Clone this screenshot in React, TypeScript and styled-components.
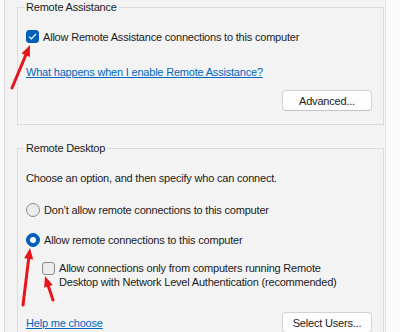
import React from "react";
import styled, { createGlobalStyle } from "styled-components";

const GlobalStyle = createGlobalStyle`
  html, body {
    margin: 0;
    padding: 0;
    background: #fafafa;
  }
  body {
    font-family: "Liberation Sans", Arial, sans-serif;
    font-size: 11px;
    letter-spacing: -0.2px;
    color: #1b1b1b;
  }
`;

const Page = styled.div`
  position: relative;
  width: 400px;
  height: 332px;
  overflow: hidden;
`;

const Window = styled.div`
  box-sizing: border-box;
  margin-left: 4px;
  width: 382px;
  height: 332px;
  background: #f3f3f3;
  border-left: 1px solid #dcdcdc;
  border-right: 1px solid #e2e2e2;
  padding: 0 1px 0 12px;
`;

const Group = styled.fieldset<{ $gap?: number }>`
  margin: ${(p) => p.$gap ?? 0}px 0 0 0;
  padding: 0 11px 13px 8px;
  border: 1px solid #dcdcdc;
  box-shadow: inset 0 0 0 0 transparent;
  min-width: 0;
  display: flex;
  flex-direction: column;
  align-items: flex-start;
`;

const Legend = styled.legend`
  margin-left: -2px;
  padding: 0 2px;
  line-height: 14px;
  height: 14px;
`;

const Text = styled.div<{ $top: number }>`
  margin-top: ${(p) => p.$top}px;
  line-height: 16px;
`;

const Option = styled.label<{ $top: number; $indent?: number }>`
  display: flex;
  align-items: flex-start;
  gap: 4px;
  margin-top: ${(p) => p.$top}px;
  margin-left: ${(p) => p.$indent ?? 0}px;
  line-height: 14px;
  min-height: 16px;
`;

const OptionText = styled.span<{ $lh?: number }>`
  line-height: ${(p) => p.$lh ?? 16}px;
`;

const Box = styled.span<{ $checked?: boolean }>`
  flex: none;
  box-sizing: border-box;
  width: 13px;
  height: 13px;
  margin-top: 1px;
  border-radius: 3px;
  display: flex;
  align-items: center;
  justify-content: center;
  background: ${(p) => (p.$checked ? "#005fb8" : "#ececec")};
  border: 1px solid ${(p) => (p.$checked ? "#005fb8" : "#8a8a8a")};
`;

const Radio = styled.span<{ $checked?: boolean }>`
  flex: none;
  box-sizing: border-box;
  width: 14px;
  height: 14px;
  margin-top: 1px;
  border-radius: 50%;
  display: flex;
  align-items: center;
  justify-content: center;
  background: ${(p) => (p.$checked ? "#005fb8" : "#ececec")};
  border: 1px solid ${(p) => (p.$checked ? "#005fb8" : "#8a8a8a")};

  &::after {
    content: "";
    display: ${(p) => (p.$checked ? "block" : "none")};
    width: 6px;
    height: 6px;
    border-radius: 50%;
    background: #ffffff;
  }
`;

const Link = styled.a<{ $top?: number }>`
  margin-top: ${(p) => p.$top ?? 0}px;
  line-height: 16px;
  color: #0067c0;
  text-decoration: underline;
  cursor: pointer;
`;

const ButtonRow = styled.div<{ $top: number }>`
  align-self: stretch;
  display: flex;
  align-items: center;
  justify-content: space-between;
  margin-top: ${(p) => p.$top}px;
`;

const Button = styled.button`
  box-sizing: border-box;
  margin-left: auto;
  width: 90px;
  height: 21px;
  padding: 0;
  font: inherit;
  letter-spacing: inherit;
  color: #1b1b1b;
  background: #fdfdfd;
  border: 1px solid #d3d3d3;
  border-bottom-color: #c4c4c4;
  border-radius: 4px;
`;

const Overlay = styled.svg`
  position: absolute;
  left: 0;
  top: 0;
  pointer-events: none;
`;

const Check = () => (
  <svg width="9" height="7" viewBox="0 0 9 7">
    <path d="M1 3.6 L3.3 5.8 L8 1" fill="none" stroke="#fff" strokeWidth="1.2" />
  </svg>
);

const Arrow = ({ x1, y1, x2, y2 }: { x1: number; y1: number; x2: number; y2: number }) => {
  const dx = x2 - x1;
  const dy = y2 - y1;
  const len = Math.hypot(dx, dy);
  const ux = dx / len;
  const uy = dy / len;
  const head = 11;
  const half = 4.5;
  const bx = x2 - ux * head;
  const by = y2 - uy * head;
  const pts = [
    `${x2},${y2}`,
    `${bx - uy * half},${by + ux * half}`,
    `${bx + uy * half},${by - ux * half}`,
  ].join(" ");
  return (
    <g>
      <line x1={x1} y1={y1} x2={bx} y2={by} stroke="#e8161c" strokeWidth="3" strokeLinecap="round" />
      <polygon points={pts} fill="#e8161c" />
    </g>
  );
};

export default function App() {
  return (
    <Page>
      <GlobalStyle />
      <Window>
        <Group>
          <Legend>Remote Assistance</Legend>
          <Option $top={15}>
            <Box $checked>
              <Check />
            </Box>
            <OptionText>Allow Remote Assistance connections to this computer</OptionText>
          </Option>
          <Link $top={19}>What happens when I enable Remote Assistance?</Link>
          <ButtonRow $top={10}>
            <Button>Advanced...</Button>
          </ButtonRow>
        </Group>

        <Group $gap={16}>
          <Legend>Remote Desktop</Legend>
          <Text $top={15}>Choose an option, and then specify who can connect.</Text>
          <Option $top={16}>
            <Radio />
            <OptionText>Don’t allow remote connections to this computer</OptionText>
          </Option>
          <Option $top={14}>
            <Radio $checked />
            <OptionText>Allow remote connections to this computer</OptionText>
          </Option>
          <Option $top={13} $indent={16}>
            <Box />
            <OptionText $lh={14}>
              Allow connections only from computers running Remote
              <br />
              Desktop with Network Level Authentication (recommended)
            </OptionText>
          </Option>
          <ButtonRow $top={23}>
            <Link>Help me choose</Link>
            <Button>Select Users...</Button>
          </ButtonRow>
        </Group>
      </Window>

      <Overlay width="400" height="332" viewBox="0 0 400 332">
        <Arrow x1={12} y1={88} x2={30} y2={45} />
        <Arrow x1={23} y1={305} x2={30} y2={248} />
        <Arrow x1={53} y1={300} x2={45} y2={276} />
      </Overlay>
    </Page>
  );
}
